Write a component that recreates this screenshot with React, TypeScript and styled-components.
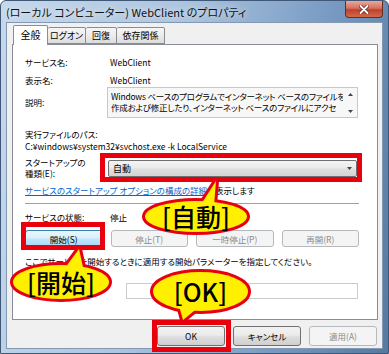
import React from "react";
import styled, { createGlobalStyle } from "styled-components";

const FONT = `"Noto Sans CJK JP", "Noto Sans", sans-serif`;

const GlobalStyle = createGlobalStyle`
  html, body { margin: 0; padding: 0; background: #ffffff; }
  body { font-family: ${FONT}; }
`;

const Window = styled.div`
  position: relative;
  width: 389px;
  height: 354px;
  box-sizing: border-box;
  background: linear-gradient(100deg, #c6d8eb 0%, #adc5df 40%, #7b9dc5 72%, #56799f 100%);
  border: 1px solid #3f5877;
  border-radius: 6px 6px 0 0;
  display: flex;
  flex-direction: column;
  overflow: hidden;
  font-family: ${FONT};
  font-feature-settings: "palt";
  color: #000;
`;

const TitleBar = styled.div`
  height: 21px;
  display: flex;
  align-items: flex-start;
  justify-content: space-between;
  padding-left: 5px;
`;

const TitleText = styled.div`
  height: 22px;
  line-height: 22px;
  font-size: 11px;
  color: #111;
  text-shadow: 0 0 6px rgba(255, 255, 255, 0.9);
`;

const CloseButton = styled.div`
  width: 38px;
  height: 17px;
  margin-right: 5px;
  box-sizing: border-box;
  border: 1px solid #6a2b24;
  border-top: none;
  border-radius: 0 0 4px 4px;
  background: linear-gradient(#e9a89b 0%, #d5705f 45%, #c0402c 55%, #cf6a4a 100%);
  display: flex;
  align-items: center;
  justify-content: center;
`;

const Client = styled.div`
  flex: 1;
  margin: 0 5px 4px 5px;
  background: #f0f0f0;
  border: 1px solid #8398b3;
  display: flex;
  flex-direction: column;
  padding: 2px 4px 0 5px;
`;

const TabStrip = styled.div`
  height: 19px;
  display: flex;
  align-items: flex-end;
  padding-left: 1px;
  position: relative;
  z-index: 1;
`;

const Tab = styled.div<{ $w: number; $active?: boolean }>`
  width: ${(p) => p.$w}px;
  box-sizing: border-box;
  height: ${(p) => (p.$active ? 20 : 17)}px;
  margin-bottom: ${(p) => (p.$active ? -1 : 0)}px;
  border: 1px solid #898c95;
  border-bottom: ${(p) => (p.$active ? "none" : "1px solid #898c95")};
  border-left: ${(p) => (p.$active ? "1px solid #898c95" : "none")};
  border-radius: 2px 2px 0 0;
  background: ${(p) =>
    p.$active ? "#ffffff" : "linear-gradient(#f6f6f6 0%, #ececec 50%, #dcdcdc 100%)"};
  font-size: ${(p) => (p.$active ? 10 : 9)}px;
  white-space: nowrap;
  display: flex;
  align-items: center;
  justify-content: center;
  padding-bottom: ${(p) => (p.$active ? 2 : 0)}px;
`;

const Panel = styled.div`
  height: 276px;
  box-sizing: border-box;
  background: #ffffff;
  border: 1px solid #898c95;
  display: flex;
  flex-direction: column;
  padding: 10px 18px 0 12px;
  font-size: 8.5px;
`;

const Row = styled.div<{ $mt: number; $h: number }>`
  display: flex;
  align-items: center;
  margin-top: ${(p) => p.$mt}px;
  height: ${(p) => p.$h}px;
  line-height: ${(p) => p.$h}px;
  white-space: nowrap;
`;

const Label = styled.div<{ $w?: number; $ls?: number }>`
  width: ${(p) => p.$w ?? 83}px;
  flex-shrink: 0;
  line-height: 11px;
  letter-spacing: ${(p) => p.$ls ?? 0}px;
`;

const Value = styled.div`
  padding-left: 2px;
`;

const DescBox = styled.div`
  width: 251px;
  height: 31px;
  box-sizing: border-box;
  margin-left: -1px;
  border: 1px solid #c6c8cc;
  background: #f7f7f7;
  display: flex;
  line-height: 11px;
  padding: 3px 0 0 3px;
`;

const DescText = styled.div`
  flex: 1;
  white-space: nowrap;
  overflow: hidden;
  letter-spacing: -0.2px;
`;

const ScrollCol = styled.div`
  width: 14px;
  display: flex;
  flex-direction: column;
  justify-content: space-between;
  align-items: center;
  padding: 2px 0 4px;
`;

const Select = styled.div`
  width: 249px;
  height: 17px;
  box-sizing: border-box;
  border: 1px solid #707070;
  border-radius: 2px;
  background: linear-gradient(#f4f4f4 0%, #ebebeb 45%, #dedede 55%, #d4d4d4 100%);
  display: flex;
  align-items: center;
  justify-content: space-between;
  padding: 0 4px 0 4px;
  line-height: 15px;
  font-size: 9px;
`;

const Link = styled.span`
  color: #0066cc;
  text-decoration: underline;
`;

const Separator = styled.div`
  margin-top: 7px;
  height: 1px;
  background: #a0a0a0;
  border-bottom: 1px solid #ffffff;
`;

const ButtonRow = styled.div`
  margin-top: 6px;
  display: grid;
  grid-template-columns: repeat(4, 1fr);
  column-gap: 8px;
`;

type BtnState = "normal" | "focus" | "disabled";

const Btn = styled.div<{ $state: BtnState; $w?: number; $h?: number }>`
  ${(p) => (p.$w ? `width: ${p.$w}px;` : "")}
  height: ${(p) => p.$h ?? 17}px;
  box-sizing: border-box;
  border-radius: 3px;
  border: 1px solid
    ${(p) =>
      p.$state === "disabled" ? "#b5b9bc" : p.$state === "focus" ? "#3c7fb1" : "#707070"};
  background: ${(p) =>
    p.$state === "disabled"
      ? "#f4f4f4"
      : p.$state === "focus"
      ? "linear-gradient(#eaf6fd 0%, #d9f0fc 45%, #bee6fd 55%, #a7d9f5 100%)"
      : "linear-gradient(#f2f2f2 0%, #ebebeb 45%, #dddddd 55%, #cfcfcf 100%)"};
  color: ${(p) => (p.$state === "disabled" ? "#8a8a8a" : "#000")};
  font-size: 8.5px;
  display: flex;
  align-items: center;
  justify-content: center;
  white-space: nowrap;
`;

const Input = styled.div`
  width: 232px;
  height: 16px;
  box-sizing: border-box;
  border: 1px solid #c9cbcf;
  background: #ffffff;
`;

const BottomBar = styled.div`
  display: flex;
  justify-content: flex-end;
  gap: 8px;
  padding: 6px 1px 0 0;
`;

const Highlight = styled.div<{ $x: number; $y: number; $w: number; $h: number }>`
  position: absolute;
  left: ${(p) => p.$x - 1}px;
  top: ${(p) => p.$y - 1}px;
  width: ${(p) => p.$w}px;
  height: ${(p) => p.$h}px;
  box-sizing: border-box;
  border: 5px solid #e8000d;
  z-index: 5;
`;

const BubbleBox = styled.div<{ $x: number; $y: number; $w: number; $h: number }>`
  position: absolute;
  left: ${(p) => p.$x - 1}px;
  top: ${(p) => p.$y - 1}px;
  width: ${(p) => p.$w}px;
  height: ${(p) => p.$h}px;
  z-index: 6;
  display: flex;
  align-items: center;
  justify-content: center;
`;

const BubbleSvg = styled.svg`
  position: absolute;
  left: 0;
  top: 0;
  overflow: visible;
`;

const BubbleText = styled.span`
  position: relative;
  font-family: ${FONT};
  font-feature-settings: normal;
  font-size: 25px;
  line-height: 25px;
  font-weight: 500;
  color: #000;
`;

type BubbleProps = {
  x: number;
  y: number;
  w: number;
  h: number;
  tail: [number, number][];
  text: string;
};

function Bubble({ x, y, w, h, tail, text }: BubbleProps) {
  const cx = w / 2;
  const cy = h / 2;
  const pts = tail.map(([a, b]) => `${a - x},${b - y}`).join(" ");
  return (
    <BubbleBox $x={x} $y={y} $w={w} $h={h}>
      <BubbleSvg width={w} height={h} viewBox={`0 0 ${w} ${h}`}>
        <g fill="#fff000" stroke="#e60012" strokeWidth={6} strokeLinejoin="round">
          <ellipse cx={cx} cy={cy} rx={cx - 1} ry={cy - 1} />
          <polygon points={pts} />
        </g>
        <g fill="#fff000" stroke="none">
          <ellipse cx={cx} cy={cy} rx={cx - 1} ry={cy - 1} />
          <polygon points={pts} />
        </g>
      </BubbleSvg>
      <BubbleText>{text}</BubbleText>
    </BubbleBox>
  );
}

const Tri = ({ up }: { up?: boolean }) => (
  <svg width="5" height="3" viewBox="0 0 5 3">
    <polygon points={up ? "2.5,0 5,3 0,3" : "0,0 5,0 2.5,3"} fill="#444" />
  </svg>
);

export default function App() {
  return (
    <>
      <GlobalStyle />
      <Window>
        <TitleBar>
          <TitleText>(ローカル コンピューター) WebClient のプロパティ</TitleText>
          <CloseButton>
            <svg width="10" height="9" viewBox="0 0 10 9">
              <path d="M1.5 1 L8.5 8 M8.5 1 L1.5 8" stroke="#5a1d16" strokeWidth="3.4" strokeLinecap="round" />
              <path d="M1.5 1 L8.5 8 M8.5 1 L1.5 8" stroke="#ffffff" strokeWidth="2" strokeLinecap="round" />
            </svg>
          </CloseButton>
        </TitleBar>
        <Client>
          <TabStrip>
            <Tab $w={35} $active>全般</Tab>
            <Tab $w={38}>ログオン</Tab>
            <Tab $w={31}>回復</Tab>
            <Tab $w={48}>依存関係</Tab>
          </TabStrip>
          <Panel>
            <Row $mt={0} $h={14}>
              <Label>サービス名:</Label>
              <Value>WebClient</Value>
            </Row>
            <Row $mt={4} $h={14}>
              <Label>表示名:</Label>
              <Value>WebClient</Value>
            </Row>
            <Row $mt={0} $h={31}>
              <Label>説明:</Label>
              <DescBox>
                <DescText>
                  Windows ベースのプログラムでインターネット ベースのファイルを
                  <br />
                  作成および修正したり、インターネット ベースのファイルにアクセ
                </DescText>
                <ScrollCol>
                  <Tri up />
                  <Tri />
                </ScrollCol>
              </DescBox>
            </Row>
            <Row $mt={10} $h={12}>
              <Label $w={200}>実行ファイルのパス:</Label>
            </Row>
            <Row $mt={0} $h={12}>
              C:¥windows¥system32¥svchost.exe -k LocalService
            </Row>
            <Row $mt={5} $h={22}>
              <Label>
                スタートアップの
                <br />
                種類(E):
              </Label>
              <Select>
                <span>自動</span>
                <Tri />
              </Select>
            </Row>
            <Row $mt={5} $h={12}>
              <Link>サービスのスタートアップ オプションの構成の詳細</Link>を表示します
            </Row>
            <Separator />
            <Row $mt={5} $h={14}>
              <Label>サービスの状態:</Label>
              <Value>停止</Value>
            </Row>
            <ButtonRow>
              <Btn $state="focus">開始(S)</Btn>
              <Btn $state="disabled">停止(T)</Btn>
              <Btn $state="disabled">一時停止(P)</Btn>
              <Btn $state="disabled">再開(R)</Btn>
            </ButtonRow>
            <Row $mt={7} $h={14}>
              ここでサービスを開始するときに適用する開始パラメーターを指定してください。
            </Row>
            <Row $mt={15} $h={16}>
              <Label $w={101} $ls={-0.6}>開始パラメーター(M):</Label>
              <Input />
            </Row>
          </Panel>
          <BottomBar>
            <Btn $state="normal" $w={68} $h={20}>OK</Btn>
            <Btn $state="normal" $w={68} $h={20}>キャンセル</Btn>
            <Btn $state="disabled" $w={68} $h={20}>適用(A)</Btn>
          </BottomBar>
        </Client>

        <Highlight $x={100} $y={153} $w={262} $h={29} />
        <Highlight $x={21} $y={222} $w={84} $h={28} />
        <Highlight $x={152} $y={320} $w={79} $h={32} />

        <Bubble
          x={144}
          y={200}
          w={104}
          h={33}
          text="[自動]"
          tail={[[200, 206], [216, 181], [214, 206]]}
        />
        <Bubble
          x={12}
          y={264}
          w={98}
          h={36}
          text="[開始]"
          tail={[[62, 272], [79, 249], [84, 272]]}
        />
        <Bubble
          x={152}
          y={271}
          w={97}
          h={41}
          text="[OK]"
          tail={[[178, 302], [183, 320], [200, 306]]}
        />
      </Window>
    </>
  );
}
